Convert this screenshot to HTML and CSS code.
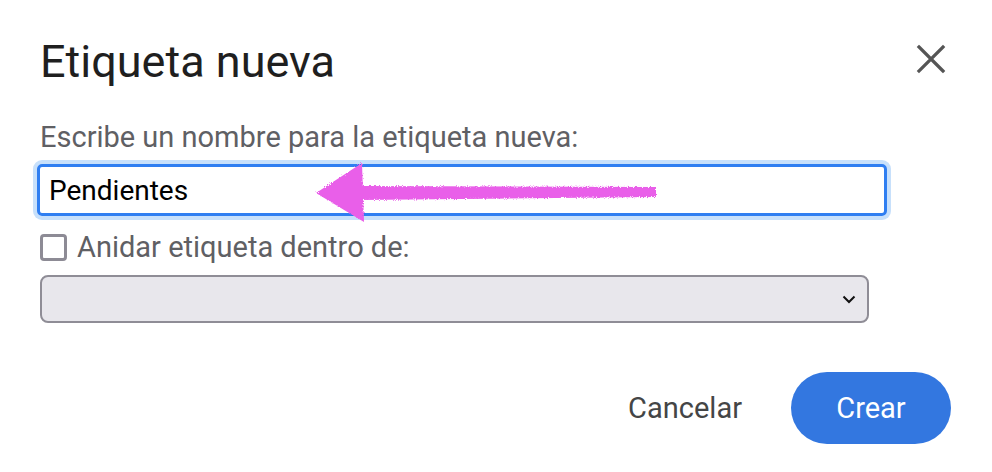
FILE: index.html
```html
<!DOCTYPE html>
<html lang="es">
<head>
<meta charset="utf-8">
<link rel="stylesheet" href="styles.css">
</head>
<body>
<div class="dialog">
  <div class="header">
    <h1 class="title">Etiqueta nueva</h1>
    <button class="close" aria-label="Cerrar">
      <svg width="30" height="30" viewBox="0 0 30 30"><path d="M3 3 L27 27 M27 3 L3 27" stroke="#555" stroke-width="3.2" stroke-linecap="square" fill="none"/></svg>
    </button>
  </div>
  <div class="label">Escribe un nombre para la etiqueta nueva:</div>
  <div class="field">
    <div class="input">Pendientes</div>
    <svg class="arrow" width="360" height="66" viewBox="0 0 360 66">
      <defs>
        <filter id="rough" x="-5%" y="-20%" width="110%" height="140%">
          <feTurbulence type="fractalNoise" baseFrequency="0.9" numOctaves="2" seed="3" result="n"/>
          <feDisplacementMap in="SourceGraphic" in2="n" scale="4"/>
        </filter>
      </defs>
      <g fill="#e95ee9" filter="url(#rough)">
        <path d="M4 33 L50 3 L52 62 Z"/>
        <path d="M48 26 L344 27 L344 37 L48 40 Z"/>
      </g>
    </svg>
  </div>
  <label class="check-row">
    <span class="checkbox"></span>
    <span class="check-label">Anidar etiqueta dentro de:</span>
  </label>
  <div class="select">
    <svg width="14" height="9" viewBox="0 0 14 9"><path d="M1.5 1.5 L7 7 L12.5 1.5" stroke="#111" stroke-width="2" fill="none"/></svg>
  </div>
  <div class="actions">
    <button class="btn-text">Cancelar</button>
    <button class="btn-primary">Crear</button>
  </div>
</div>
</body>
</html>
```
FILE: styles.css
```css
html, body {
  margin: 0;
  background: #ffffff;
}
body {
  font-family: Roboto, "Noto Sans", sans-serif;
}
.dialog {
  padding: 32px 41px 0 40px;
}
.header {
  display: flex;
  justify-content: space-between;
  align-items: flex-start;
}
.title {
  margin: 0;
  font-weight: 400;
  font-size: 45px;
  line-height: 60px;
  color: #1f1f1f;
  letter-spacing: 0;
}
.close {
  margin-top: 12px;
  margin-right: 5px;
  padding: 0;
  border: none;
  background: transparent;
  width: 30px;
  height: 30px;
}
.close svg { display: block; }
.label {
  margin-top: 27px;
  font-size: 29px;
  line-height: 36px;
  color: #5f6064;
}
.field {
  position: relative;
  margin-top: 9px;
  margin-left: -3px;
  width: 850px;
}
.input {
  box-sizing: border-box;
  height: 52px;
  border: 3px solid #2f7ef1;
  border-radius: 5px;
  box-shadow: 0 0 0 4px #c7e0fb;
  padding: 0 9px;
  display: flex;
  align-items: center;
  font-size: 28px;
  color: #000;
}
.arrow {
  position: absolute;
  left: 275px;
  top: -4px;
}
.check-row {
  display: flex;
  align-items: center;
  margin-top: 15px;
  height: 32px;
}
.checkbox {
  box-sizing: border-box;
  flex: none;
  width: 27px;
  height: 27px;
  border: 3px solid #8d8b95;
  border-radius: 4px;
  margin-right: 10px;
}
.check-label {
  font-size: 29px;
  color: #5f6064;
}
.select {
  box-sizing: border-box;
  margin-top: 12px;
  width: 829px;
  height: 48px;
  border: 2px solid #8f8d96;
  border-radius: 8px;
  background: #e8e7ec;
  display: flex;
  align-items: center;
  justify-content: flex-end;
  padding-right: 11px;
}
.select svg { display: block; }
.actions {
  display: flex;
  justify-content: flex-end;
  align-items: center;
  margin-top: 49px;
  gap: 49px;
}
.btn-text {
  border: none;
  background: transparent;
  padding: 0;
  font-family: Roboto, "Noto Sans", sans-serif;
  font-size: 29px;
  color: #444546;
}
.btn-primary {
  border: none;
  width: 160px;
  height: 72px;
  border-radius: 36px;
  background: #3377e0;
  color: #ffffff;
  font-family: Roboto, "Noto Sans", sans-serif;
  font-size: 29px;
}
```
